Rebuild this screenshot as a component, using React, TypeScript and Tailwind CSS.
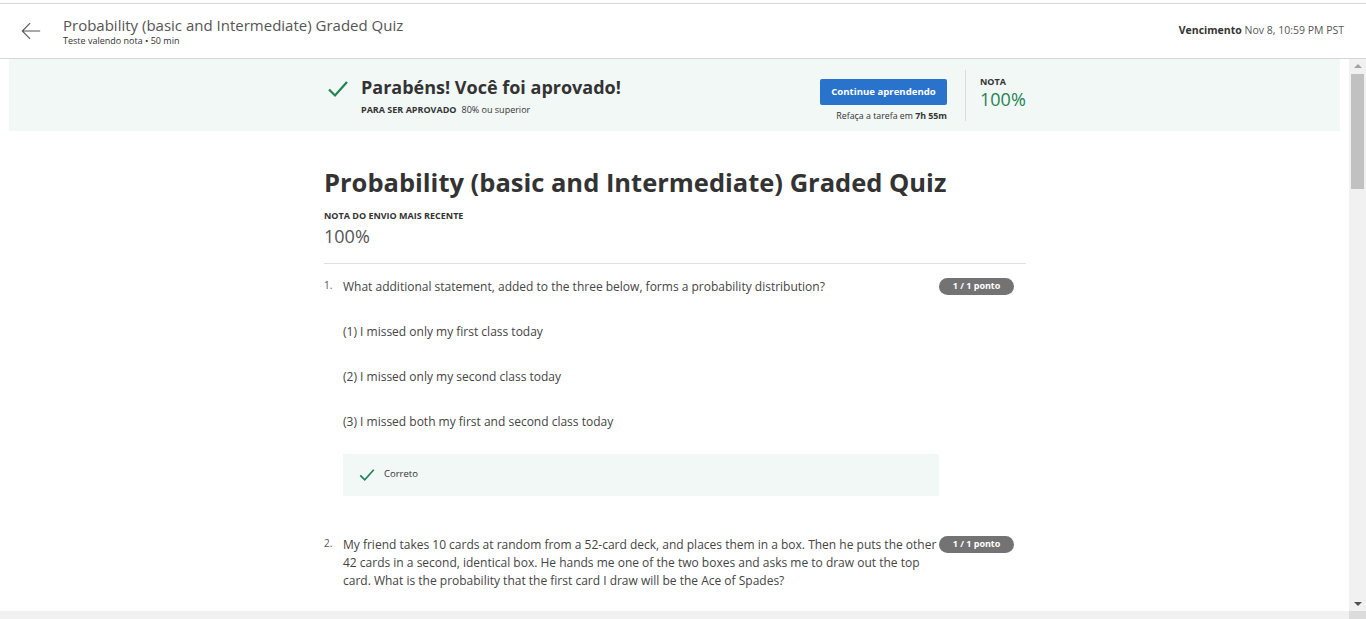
import React from "react";

const Check = ({ className }: { className?: string }) => (
  <svg viewBox="0 0 24 24" className={className} fill="none" stroke="#1f8354" strokeWidth="2.2">
    <path d="M3 12.5l6 6L21 5" />
  </svg>
);

const Badge = () => (
  <span className="inline-flex h-[17px] w-[75px] shrink-0 items-center justify-center rounded-full bg-[#737373] text-[9px] font-bold text-white">
    1 / 1 ponto
  </span>
);

export default function App() {
  return (
    <div className="flex h-[619px] w-[1366px] flex-col overflow-hidden bg-white text-[#373a3c]" style={{ fontFamily: '"Open Sans", sans-serif' }}>
      {/* header */}
      <div className="mt-[3px] flex h-[56px] shrink-0 items-center border-y border-[#d6d6d6] pr-[22px]">
        <svg viewBox="0 0 24 24" className="ml-[20px] h-[22px] w-[22px]" fill="none" stroke="#555" strokeWidth="1.2">
          <path d="M22 12H3M11 3.5L2.5 12 11 20.5" />
        </svg>
        <div className="ml-[21px] flex flex-col">
          <div className="text-[15px] leading-[20px] text-[#555]">Probability (basic and Intermediate) Graded Quiz</div>
          <div className="text-[9px] leading-[12px] text-[#333]">Teste valendo nota • 50 min</div>
        </div>
        <div className="ml-auto text-[10.5px] text-[#555]">
          <span className="font-bold text-[#333]">Vencimento</span> Nov 8, 10:59 PM PST
        </div>
      </div>
      {/* body */}
      <div className="flex min-h-0 flex-1">
        <div className="flex-1 overflow-hidden">
          <div className="mx-[9px] flex h-[72px] items-center bg-[#f2f8f6]">
            <div className="ml-[317px] flex w-[621px] items-center justify-between">
              <div className="flex items-start">
                <Check className="mt-[3px] h-[24px] w-[24px]" />
                <div className="ml-[11px]">
                  <div className="text-[18px] font-bold leading-[26px] text-[#333]">Parabéns! Você foi aprovado!</div>
                  <div className="mt-[4px] text-[9px] leading-[12px] text-[#333]">
                    <span className="font-bold">PARA SER APROVADO</span>
                    <span className="ml-[5px]">80% ou superior</span>
                  </div>
                </div>
              </div>
              <div className="flex flex-col items-end pt-[12px]">
                <div className="flex h-[26px] w-[127px] items-center justify-center rounded-[2px] bg-[#2a73cc] text-[9.6px] font-bold text-white">Continue aprendendo</div>
                <div className="mt-[5px] text-[8.8px] text-[#333]">
                  Refaça a tarefa em <span className="font-bold">7h 55m</span>
                </div>
              </div>
            </div>
            <div className="ml-[18px] h-[51px] w-px bg-[#dcdcdc]" />
            <div className="ml-[14px] flex flex-col self-start pt-[17px]">
              <div className="text-[9px] font-bold leading-[12px] text-[#333]">NOTA</div>
              <div className="text-[18px] leading-[22px] text-[#1f8354]">100%</div>
            </div>
          </div>
          <div className="ml-[324px] w-[702px]">
            <div className="mt-[35px] text-[25.5px] font-bold leading-[32px] text-[#333]">Probability (basic and Intermediate) Graded Quiz</div>
            <div className="mt-[11px] text-[9px] font-bold text-[#333]">NOTA DO ENVIO MAIS RECENTE</div>
            <div className="mt-[2px] text-[18px] leading-[22px] text-[#555]">100%</div>
            <div className="mt-[16px] h-px bg-[#e0e0e0]" />
            <div className="mt-[14px] flex items-start">
              <div className="w-[19px] text-[10px] text-[#555]">1.</div>
              <div className="flex-1">
                <div className="flex items-start justify-between pr-[12px]">
                  <div className="text-[12px] leading-[18px] text-[#444]">What additional statement, added to the three below, forms a probability distribution?</div>
                  <Badge />
                </div>
                <div className="mt-[27px] text-[12px] leading-[18px] text-[#444]">(1) I missed only my first class today</div>
                <div className="mt-[27px] text-[12px] leading-[18px] text-[#444]">(2) I missed only my second class today</div>
                <div className="mt-[27px] text-[12px] leading-[18px] text-[#444]">(3) I missed both my first and second class today</div>
                <div className="mt-[23px] flex h-[42px] w-[596px] items-center bg-[#f2f8f6] pl-[15px]">
                  <Check className="h-[18px] w-[18px]" />
                  <span className="ml-[8px] text-[9.5px] text-[#333]">Correto</span>
                </div>
              </div>
            </div>
            <div className="mt-[40px] flex items-start">
              <div className="w-[19px] text-[10px] text-[#555]">2.</div>
              <div className="flex flex-1 items-start">
                <div className="w-[596px] text-[12px] leading-[18px] text-[#444]">
                  My friend takes 10 cards at random from a 52-card deck, and places them in a box. Then he puts the other 42 cards in a second, identical box. He hands me one of the two boxes and asks me to draw out the top card. What is the probability that the first card I draw will be the Ace of Spades?
                </div>
                <Badge />
              </div>
            </div>
          </div>
        </div>
        {/* vertical scrollbar */}
        <div className="flex w-[17px] shrink-0 flex-col items-center bg-[#f1f1f1]">
          <div className="mt-[5px] h-0 w-0 border-x-[4px] border-b-[4px] border-x-transparent border-b-[#a3a3a3]" />
          <div className="mt-[6px] h-[115px] w-[13px] bg-[#c1c1c1]" />
          <div className="mt-auto mb-[5px] h-0 w-0 border-x-[4px] border-t-[4px] border-x-transparent border-t-[#505050]" />
        </div>
      </div>
      <div className="flex h-[8px] shrink-0">
        <div className="flex-1 bg-[#f1f1f1]" />
        <div className="w-[17px] bg-[#dcdcdc]" />
      </div>
    </div>
  );
}
